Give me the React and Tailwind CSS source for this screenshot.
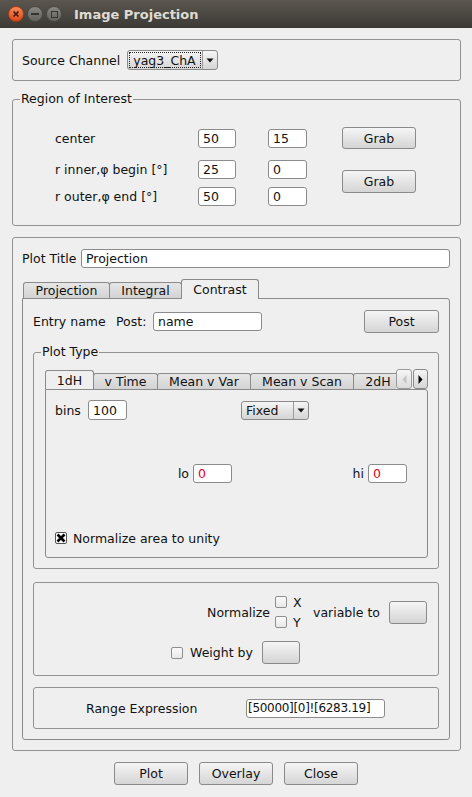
const Frame = ({ legend, className = "", children }) => (
  <div className={`relative rounded-[3px] border border-[#929292] ${className}`}>
    {legend && (
      <span className="absolute -top-[9px] left-[7px] bg-[#efefef] px-[1px] leading-[16px]">
        {legend}
      </span>
    )}
    {children}
  </div>
);

const Field = ({ value, className = "", red = false }) => (
  <div
    className={`flex items-center overflow-hidden whitespace-nowrap rounded-[3px] border border-[#8b8b8b] bg-white pl-[4px] ${
      red ? "text-[#e2001a]" : ""
    } ${className}`}
  >
    {value}
  </div>
);

const Btn = ({ label, className = "" }) => (
  <div
    className={`flex items-center justify-center rounded-[3px] border border-[#8a8a8a] bg-linear-to-b from-[#f5f5f5] to-[#d5d5d5] ${className}`}
  >
    {label}
  </div>
);

const DownArrow = () => (
  <svg width="8" height="5" viewBox="0 0 8 5">
    <path d="M0.5 0.5 L7.5 0.5 L4 4.5 Z" fill="#111" />
  </svg>
);

const Combo = ({ value, className = "", focused = false }) => (
  <div
    className={`flex rounded-[3px] border border-[#8a8a8a] bg-linear-to-b from-[#f5f5f5] to-[#d5d5d5] ${className}`}
  >
    <div className="flex flex-1 p-[1px]">
      <div
        className={`flex flex-1 items-center pl-[3px] ${
          focused ? "border border-dotted border-[#222]" : ""
        }`}
      >
        {value}
      </div>
    </div>
    <div className="flex w-[15px] items-center justify-center border-l border-[#9a9a9a]">
      <DownArrow />
    </div>
  </div>
);

const Check = ({ checked = false }) => (
  <div
    className={`flex h-[12px] w-[12px] shrink-0 items-center justify-center rounded-[2px] border ${
      checked ? "border-[#555] bg-white" : "border-[#8e8e8e] bg-linear-to-b from-[#fafafa] to-[#e8e8e8]"
    }`}
  >
    {checked && (
      <svg width="10" height="10" viewBox="0 0 10 10">
        <path d="M1.5 1.5 L8.5 8.5 M8.5 1.5 L1.5 8.5" stroke="#000" strokeWidth="2.6" />
      </svg>
    )}
  </div>
);

const Tab = ({ label, active = false, className = "" }) =>
  active ? (
    <div
      className={`relative z-10 -mb-[1px] -ml-[1px] flex h-[20px] items-center justify-center rounded-t-[3px] border border-b-0 border-[#8a8a8a] bg-[#efefef] ${className}`}
    >
      {label}
    </div>
  ) : (
    <div
      className={`-ml-[1px] flex h-[16px] items-center justify-center rounded-t-[3px] border border-b-0 border-[#8a8a8a] bg-linear-to-b from-[#e6e6e6] to-[#d3d3d3] first:ml-0 ${className}`}
    >
      {label}
    </div>
  );

export default function App() {
  return (
    <div className="h-[797px] w-[472px] overflow-hidden bg-[#efefef] font-['DejaVu_Sans',sans-serif] text-[12.5px] leading-[15px] text-[#111]">
      {/* title bar */}
      <div className="flex h-[28px] items-center bg-linear-to-b from-[#5b5750] to-[#3c3a35] pl-[8px]">
        <div className="flex h-[16px] w-[16px] items-center justify-center rounded-full border border-[#a93c12] bg-linear-to-b from-[#f7895a] to-[#dc4813]">
          <svg width="8" height="8" viewBox="0 0 8 8">
            <path d="M1.5 1.5 L6.5 6.5 M6.5 1.5 L1.5 6.5" stroke="#3d1406" strokeWidth="1.5" />
          </svg>
        </div>
        <div className="ml-[3px] flex h-[16px] w-[16px] items-center justify-center rounded-full border border-[#4c4a45] bg-linear-to-b from-[#8b8883] to-[#64625d]">
          <div className="h-[2px] w-[8px] bg-[#37352f]" />
        </div>
        <div className="ml-[3px] flex h-[16px] w-[16px] items-center justify-center rounded-full border border-[#4c4a45] bg-linear-to-b from-[#8b8883] to-[#64625d]">
          <div className="h-[7px] w-[7px] border-[1.5px] border-[#37352f]" />
        </div>
        <span className="ml-[12px] text-[13px] font-bold text-[#dfdbd2]">Image Projection</span>
      </div>

      {/* source channel */}
      <Frame className="ml-[12px] mt-[11px] flex h-[42px] w-[449px] items-center pl-[9px]">
        <span>Source Channel</span>
        <Combo value="yag3_ChA" focused className="ml-[7px] h-[20px] w-[91px]" />
      </Frame>

      {/* region of interest */}
      <Frame legend="Region of Interest" className="ml-[12px] mt-[18px] h-[127px] w-[449px] pl-[42px] pt-[27px]">
        <div className="flex h-[22px] items-center">
          <span className="w-[143px]">center</span>
          <Field value="50" className="h-[19px] w-[38px]" />
          <Field value="15" className="ml-[32px] h-[19px] w-[39px]" />
          <Btn label="Grab" className="ml-[35px] h-[22px] w-[74px]" />
        </div>
        <div className="mt-[11px] flex">
          <div className="flex flex-col gap-[8px]">
            <div className="flex h-[19px] items-center">
              <span className="w-[143px]">r inner,φ begin [°]</span>
              <Field value="25" className="h-[19px] w-[38px]" />
              <Field value="0" className="ml-[32px] h-[19px] w-[39px]" />
            </div>
            <div className="flex h-[19px] items-center">
              <span className="w-[143px]">r outer,φ end [°]</span>
              <Field value="50" className="h-[19px] w-[38px]" />
              <Field value="0" className="ml-[32px] h-[19px] w-[39px]" />
            </div>
          </div>
          <Btn label="Grab" className="ml-[35px] mt-[10px] h-[23px] w-[74px]" />
        </div>
      </Frame>

      {/* plot settings */}
      <Frame className="ml-[12px] mt-[11px] h-[514px] w-[449px] pl-[9px] pr-[10px] pt-[11px]">
        <div className="flex h-[19px] items-center">
          <span className="w-[59px]">Plot Title</span>
          <Field value="Projection" className="h-[19px] flex-1" />
        </div>

        <div className="mt-[11px] flex h-[19px] items-end pl-[1px]">
          <Tab label="Projection" className="w-[87px]" />
          <Tab label="Integral" className="w-[73px]" />
          <Tab label="Contrast" active className="w-[78px]" />
        </div>
        <div className="h-[442px] rounded-b-[3px] rounded-tr-[3px] border border-[#8a8a8a] pt-[11px]">
          <div className="flex h-[23px] items-center pl-[10px] pr-[10px]">
            <span className="w-[83px]">Entry name</span>
            <span className="w-[37px]">Post:</span>
            <Field value="name" className="h-[19px] w-[109px]" />
            <Btn label="Post" className="ml-auto h-[23px] w-[75px]" />
          </div>

          {/* plot type */}
          <Frame legend="Plot Type" className="ml-[10px] mr-[10px] mt-[19px] h-[217px] pl-[11px] pr-[10px] pt-[17px]">
            <div className="flex h-[19px] items-end">
              <div className="flex h-[19px] w-[352px] items-end overflow-hidden pl-[1px]">
                <Tab label="1dH" active className="w-[49px] shrink-0" />
                <Tab label="v Time" className="w-[65px] shrink-0" />
                <Tab label="Mean v Var" className="w-[94px] shrink-0" />
                <Tab label="Mean v Scan" className="w-[104px] shrink-0" />
                <Tab label="2dH" className="w-[50px] shrink-0" />
              </div>
              <div className="flex h-[20px] w-[16px] items-center justify-center rounded-[3px] border border-[#9a9a9a] bg-linear-to-b from-[#f5f5f5] to-[#dcdcdc]">
                <svg width="5" height="9" viewBox="0 0 5 9">
                  <path d="M4.5 0 L0.5 4.5 L4.5 9 Z" fill="#c4c4c4" />
                </svg>
              </div>
              <div className="ml-[1px] flex h-[20px] w-[15px] items-center justify-center rounded-[3px] border border-[#8a8a8a] bg-linear-to-b from-[#f5f5f5] to-[#d5d5d5]">
                <svg width="5" height="9" viewBox="0 0 5 9">
                  <path d="M0.5 0 L4.5 4.5 L0.5 9 Z" fill="#000" />
                </svg>
              </div>
            </div>
            <div className="h-[169px] rounded-b-[3px] rounded-tr-[3px] border border-[#8a8a8a] pt-[10px]">
              <div className="flex h-[20px] items-center pl-[9px]">
                <span className="w-[33px]">bins</span>
                <Field value="100" className="h-[20px] w-[39px]" />
                <Combo value="Fixed" className="ml-[114px] h-[19px] w-[68px]" />
              </div>
              <div className="mt-[44px] flex h-[19px] items-center">
                <span className="w-[143px] text-right">lo</span>
                <Field value="0" red className="ml-[4px] h-[19px] w-[39px]" />
                <span className="w-[132px] text-right">hi</span>
                <Field value="0" red className="ml-[4px] h-[19px] w-[39px]" />
              </div>
              <div className="mt-[47px] flex h-[16px] items-center pl-[9px]">
                <Check checked />
                <span className="ml-[6px]">Normalize area to unity</span>
              </div>
            </div>
          </Frame>

          {/* normalize */}
          <Frame className="ml-[10px] mr-[10px] mt-[13px] h-[94px] pt-[9px]">
            <div className="flex h-[40px] items-center">
              <span className="w-[236px] text-right">Normalize</span>
              <div className="ml-[5px] flex w-[38px] flex-col">
                <div className="flex h-[20px] items-center gap-[6px]">
                  <Check />
                  <span>X</span>
                </div>
                <div className="flex h-[20px] items-center gap-[6px]">
                  <Check />
                  <span>Y</span>
                </div>
              </div>
              <span className="w-[76px]">variable to</span>
              <Btn label="" className="h-[23px] w-[38px]" />
            </div>
            <div className="mt-[9px] flex h-[23px] items-center pl-[137px]">
              <Check />
              <span className="ml-[7px] w-[72px]">Weight by</span>
              <Btn label="" className="h-[23px] w-[38px]" />
            </div>
          </Frame>

          {/* range */}
          <Frame className="ml-[10px] mr-[10px] mt-[11px] flex h-[42px] items-center pl-[52px]">
            <span className="w-[160px]">Range Expression</span>
            <Field value="[50000][0]![6283.19]" className="h-[19px] w-[139px] !pl-[1px] text-[12px] tracking-[-0.3px]" />
          </Frame>
        </div>
      </Frame>

      {/* bottom buttons */}
      <div className="mt-[11px] flex justify-center gap-[11px]">
        <Btn label="Plot" className="h-[23px] w-[74px]" />
        <Btn label="Overlay" className="h-[23px] w-[74px]" />
        <Btn label="Close" className="h-[23px] w-[74px]" />
      </div>
    </div>
  );
}
